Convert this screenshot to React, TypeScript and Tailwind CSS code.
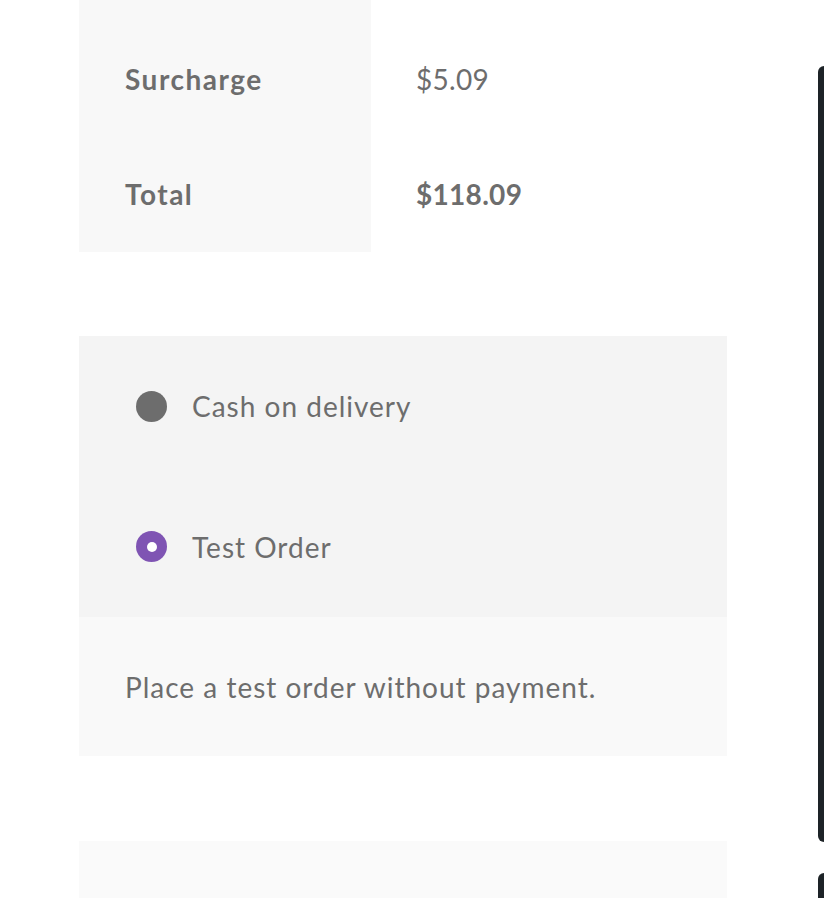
export default function App() {
  return (
    <div className="w-[824px] h-[898px] overflow-hidden bg-white flex font-['Lato',sans-serif] text-[#6d6d6d] text-[28px] tracking-[1px]">
      {/* Checkout content */}
      <div className="w-[818px] pl-[79px] flex flex-col">
        {/* Totals table */}
        <div className="w-[648px] flex shrink-0">
          <div className="w-[292px] bg-[#f8f8f8] pt-[22px] flex flex-col font-bold tracking-[1.5px]">
            <div className="h-[114px] flex items-center pl-[46px]">Surcharge</div>
            <div className="h-[116px] flex items-center pl-[46px]">Total</div>
          </div>
          <div className="flex-1 pt-[22px] flex flex-col tracking-[0.3px]">
            <div className="h-[114px] flex items-center pl-[45px]">$5.09</div>
            <div className="h-[116px] flex items-center pl-[45px] font-bold">$118.09</div>
          </div>
        </div>

        {/* Payment methods */}
        <div className="w-[648px] mt-[84px] bg-[#f4f4f4] flex flex-col shrink-0">
          <label className="h-[140px] flex items-center pl-[57px] gap-[25px]">
            <span className="w-[31px] h-[31px] rounded-full bg-[#6d6d6d]" />
            Cash on delivery
          </label>
          <label className="h-[141px] flex items-center pl-[57px] gap-[25px]">
            <span className="w-[31px] h-[31px] rounded-full bg-[#7f54b3] flex items-center justify-center">
              <span className="w-[10px] h-[10px] rounded-full bg-white" />
            </span>
            Test Order
          </label>
        </div>
        <div className="w-[648px] h-[139px] shrink-0 bg-[#f9f9f9] flex items-center pl-[46px]">
          Place a test order without payment.
        </div>

        <div className="w-[648px] h-[80px] shrink-0 mt-[85px] bg-[#fafafa]" />
      </div>

      {/* Right edge panels */}
      <div className="flex-1 flex flex-col">
        <div className="h-[66px] shrink-0" />
        <div className="h-[776px] shrink-0 bg-[#1d2327] rounded-tl-[10px] rounded-bl-[10px]" />
        <div className="h-[31px] shrink-0" />
        <div className="flex-1 bg-[#1d2327] rounded-tl-[10px]" />
      </div>
    </div>
  );
}
